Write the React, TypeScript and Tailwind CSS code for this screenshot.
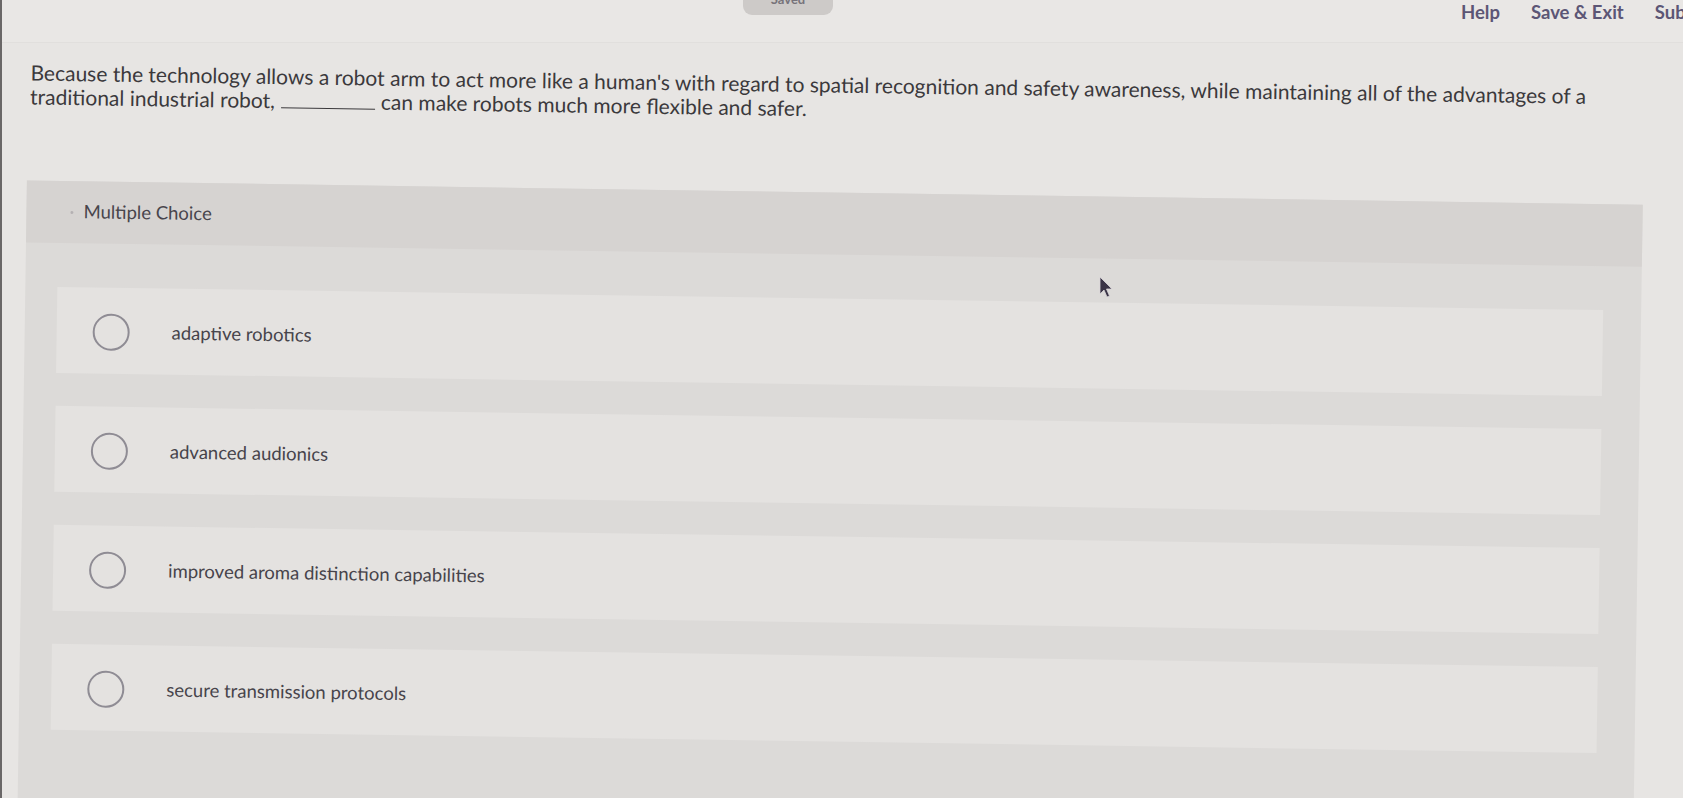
import React from "react";

const options = [
  "adaptive robotics",
  "advanced audionics",
  "improved aroma distinction capabilities",
  "secure transmission protocols",
];

function Cursor() {
  return (
    <svg
      className="absolute left-[1096px] top-[276px]"
      width="16"
      height="24"
      viewBox="0 0 16 24"
    >
      <path
        d="M2 1 L2 18 L6 14 L9 21 L11.5 20 L8.5 13 L14 13 Z"
        fill="#3a3446"
        stroke="#d8d4d8"
        strokeWidth="0.8"
        strokeLinejoin="round"
      />
    </svg>
  );
}

export default function App() {
  return (
    <div className="relative h-[798px] w-full overflow-hidden border-l-2 border-[#6a6767] bg-[#e7e5e3] font-['Lato','Liberation_Sans',sans-serif]">
      {/* top bar */}
      <header className="-ml-[2px] flex h-[43px] items-start overflow-hidden border-b border-[#e1dfdd] bg-[#e9e7e5]">
        <div className="ml-[743px] flex h-[15px] w-[90px] shrink-0 justify-center overflow-hidden rounded-b-[9px] bg-[#cdcac8]">
          <span className="-mt-[7px] block text-[13px] font-bold leading-[13px] text-[#77737a]">Saved</span>
        </div>
        <nav className="ml-[628px] flex shrink-0 gap-[31px] whitespace-nowrap text-[18.5px] font-bold leading-[24px] text-[#5c5675]">
          <span>Help</span>
          <span>Save &amp; Exit</span>
          <span>Submit</span>
        </nav>
      </header>

      {/* question + choices */}
      <main className="-ml-[2px] origin-top-left rotate-[0.86deg]">
        <p className="pl-[31px] pt-[17px] text-[21px] leading-[24px] text-[#3b393c]">
          Because the technology allows a robot arm to act more like a human's with regard to spatial recognition and safety awareness, while maintaining all of the advantages of a
          <br />
          traditional industrial robot,
          <span className="mx-[6px] inline-block w-[94px] border-b border-[#3b393c]" />
          can make robots much more flexible and safer.
        </p>

        <section className="ml-[29px] mt-[72px] w-[1616px] bg-[#dcdad8] pb-[200px]">
          <div className="flex h-[62px] items-center bg-[#d6d3d1] pl-[44px] text-[18.5px] text-[#48454c]">
            <span className="mr-[10px] h-[3px] w-[3px] rounded-full bg-[#b5b1b3]" />
            Multiple Choice
          </div>

          <div className="flex flex-col gap-[33px] pl-[32px] pr-[38px] pt-[44px]">
            {options.map((o) => (
              <label key={o} className="flex h-[86px] items-center bg-[#e4e2e0] pl-[36px] pt-[3px]">
                <span className="h-[37px] w-[37px] shrink-0 rounded-full border-2 border-[#8f8c94]" />
                <span className="ml-[42px] text-[18.5px] text-[#47444b]">{o}</span>
              </label>
            ))}
          </div>
        </section>
      </main>

      <Cursor />
    </div>
  );
}
